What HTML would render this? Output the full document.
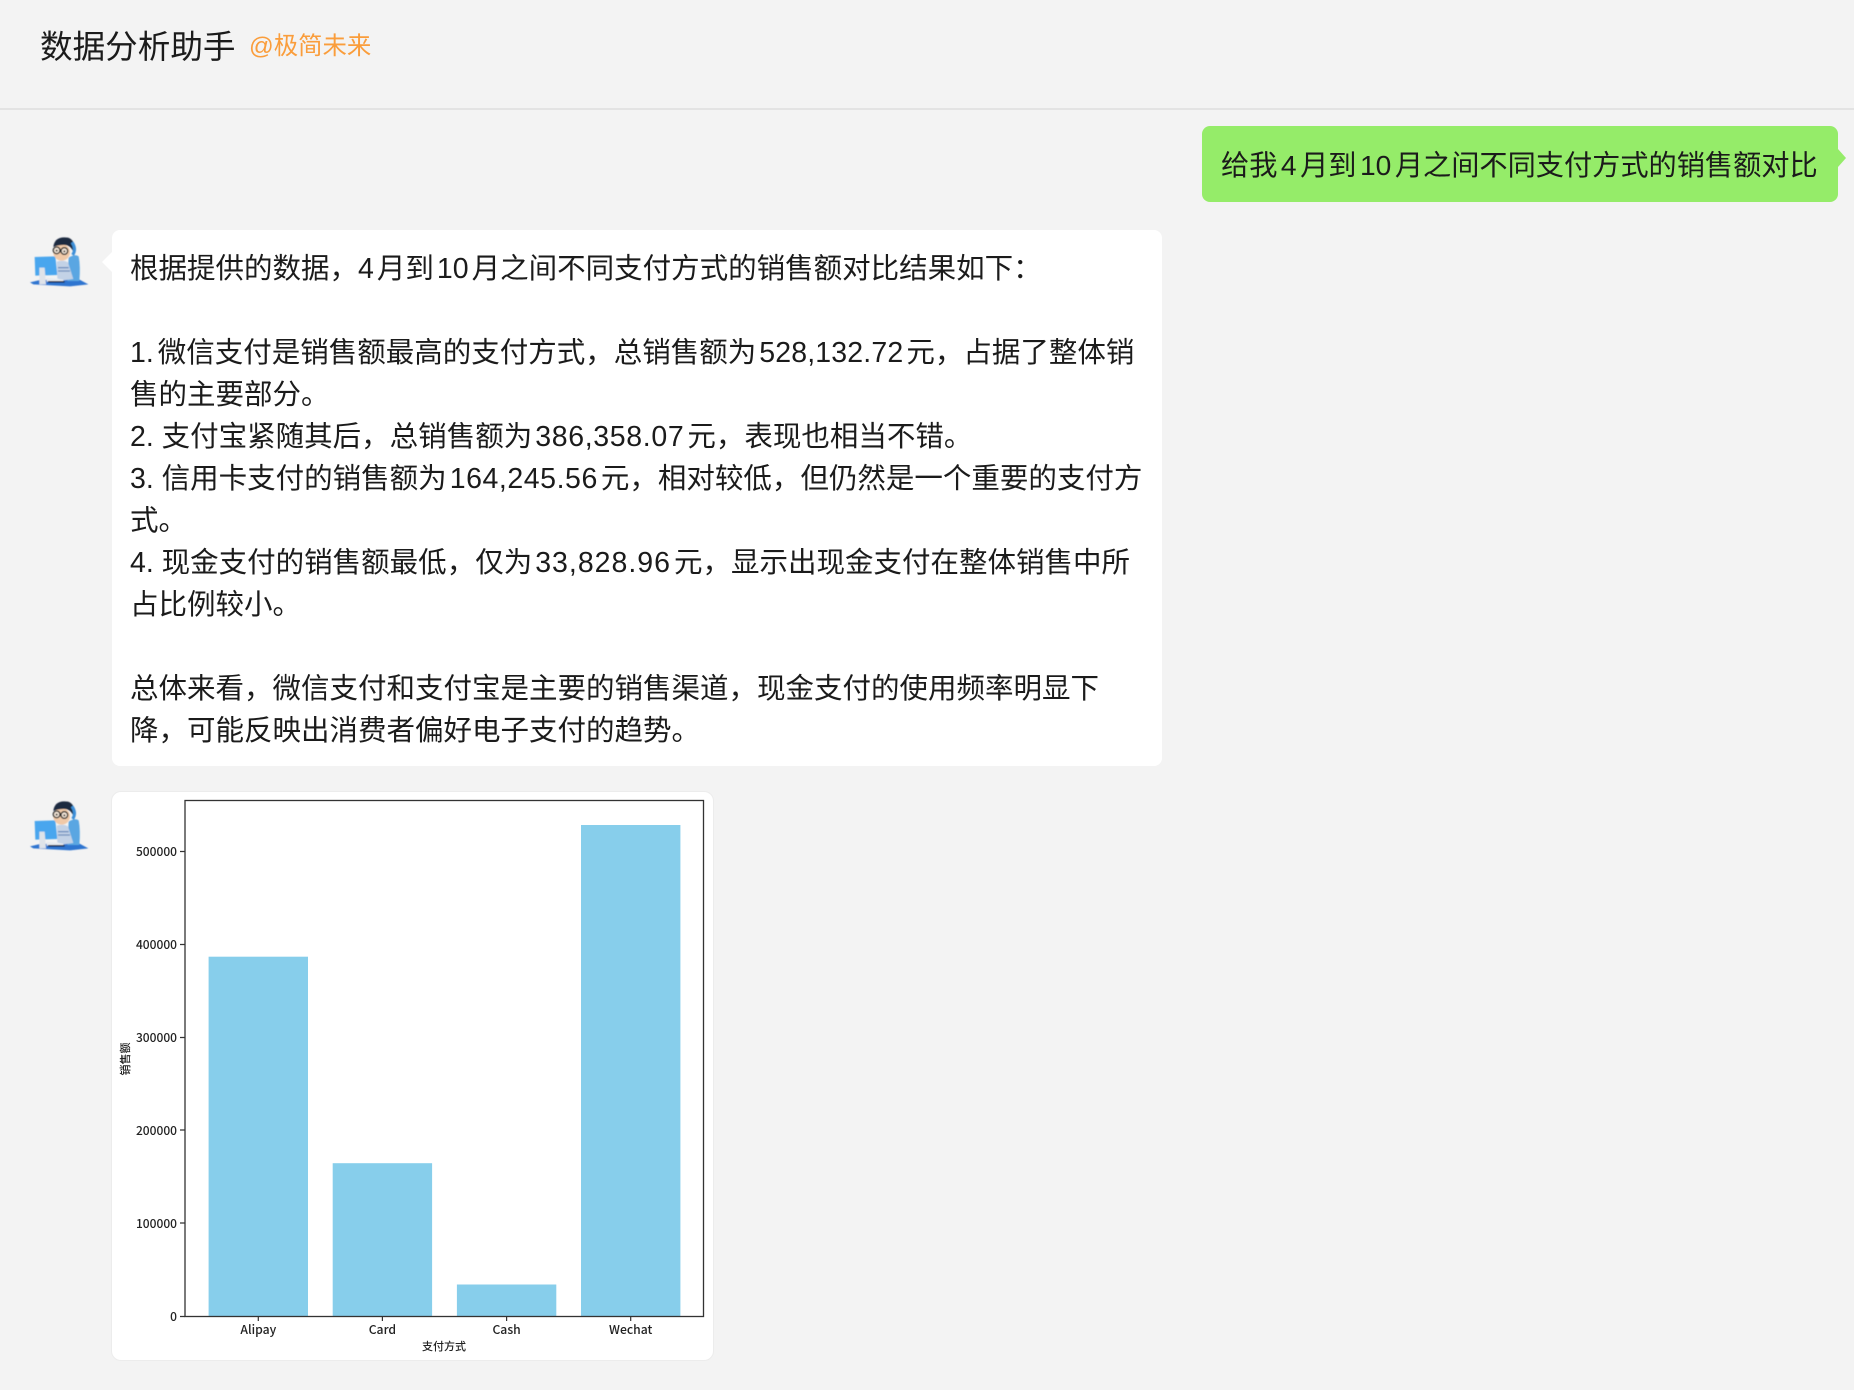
<!DOCTYPE html>
<html lang="zh"><head><meta charset="utf-8"><title>数据分析助手</title>
<style>
html,body{margin:0;padding:0;background:#f3f3f3}
body{width:1854px;height:1390px;position:relative;overflow:hidden;font-family:"Liberation Sans","Noto Sans CJK SC",sans-serif;color:#1b1b1b}
.abs{position:absolute}
.hdr{left:0;top:108px;width:1854px;height:2px;background:#e3e3e3}
.title{left:40px;top:25px;font-size:32.6px;line-height:44px;white-space:nowrap}
.sub{left:249px;top:29px;font-size:24.4px;line-height:36px;color:#fa9d3b;white-space:nowrap}
.green{left:1202px;top:126px;width:636px;height:76px;background:#95ec69;border-radius:8px;font-size:28.2px;line-height:78px;white-space:nowrap;text-indent:19px}
.green i{width:3.5px}
.tr{left:1838px;top:149px;width:0;height:0;border-left:8px solid #95ec69;border-top:9px solid transparent;border-bottom:9px solid transparent}
.msg{left:112px;top:230px;width:1050px;height:536px;background:#fff;border-radius:8px}
.tl{left:102px;top:252px;width:0;height:0;border-right:10px solid #fff;border-top:10px solid transparent;border-bottom:10px solid transparent}
.l{position:absolute;left:130px;font-size:28.5px;line-height:42px;white-space:nowrap}
i{display:inline-block;width:3px}
.n{margin-left:-4px}
.card{left:111px;top:791px;width:601px;height:568px;background:#fff;border:1px solid #ececec;border-radius:10px}
svg text{font-family:"Noto Sans CJK SC","Liberation Sans",sans-serif;fill:#222}
</style></head><body>
<div class="abs hdr"></div>
<div class="abs title">数据分析助手</div>
<div class="abs sub">@极简未来</div>

<div class="abs green">给我<i></i>4<i></i>月到<i></i>10<i></i>月之间不同支付方式的销售额对比</div>
<div class="abs tr"></div>

<svg class="abs" style="left:20px;top:225px" width="80" height="70" viewBox="0 0 240 210">
<g filter="url(#b)">
<path d="M30 172 L60 165 L175 162 L205 178 L150 184 L40 178Z" fill="#2f74d0"/>
<path d="M146 98 q18-12 30-4 q6 30 2 74 l-36 0Z" fill="#5aa6e2"/>
<path d="M44 96 L106 94 L112 150 L46 152Z" fill="#4aa6ee"/>
<path d="M58 128 L74 128 L78 178 L58 178Z" fill="#dfe3e9"/>
<path d="M110 110 q20-6 34 2 l16 50 l-30 4 l-18-6Z" fill="#c3d2e6"/>
<path d="M114 128 h32 M114 138 h36" stroke="#6e8fbd" stroke-width="4"/>
<path d="M80 158 l50 6 l0 6 l-50 0Z" fill="#e8ebef"/>
<path d="M84 168 h50 v5 h-50Z" fill="#1d2a4d"/>
<g transform="translate(0 -4)">
<ellipse cx="125" cy="86" rx="25" ry="25" fill="#f0c9a8"/>
<path d="M100 70 q4-34 44-28 q24 8 16 42 q-10-22-30-20 q-16 0-30 6Z" fill="#1f2940"/>
<circle cx="110" cy="80" r="10" fill="#f4e6d8" stroke="#222" stroke-width="4"/>
<circle cx="133" cy="82" r="10" fill="#f4e6d8" stroke="#222" stroke-width="4"/>
<circle cx="110" cy="81" r="3" fill="#222"/><circle cx="133" cy="83" r="3" fill="#222"/>
<path d="M156 56 q14 20 2 38" fill="none" stroke="#3c8fd8" stroke-width="9"/>
</g>
</g>
<defs><filter id="b"><feGaussianBlur stdDeviation="1.2"/></filter></defs>
</svg>

<div class="abs msg"></div>
<div class="abs tl"></div>
<div class="l" style="top:248px">根据提供的数据，4<i></i>月到<i></i>10<i></i>月之间不同支付方式的销售额对比结果如下：</div>
<div class="l" style="top:332px">1.<span class="n"> </span>微信支付是销售额最高的支付方式，总销售额为<i></i><span style="letter-spacing:.15px">528,132.72</span><i></i>元，占据了整体销</div>
<div class="l" style="top:374px">售的主要部分。</div>
<div class="l" style="top:416px">2. 支付宝紧随其后，总销售额为<i></i><span style="letter-spacing:.65px">386,358.07</span><i></i>元，表现也相当不错。</div>
<div class="l" style="top:458px">3. 信用卡支付的销售额为<i></i><span style="letter-spacing:.55px">164,245.56</span><i></i>元，相对较低，但仍然是一个重要的支付方</div>
<div class="l" style="top:500px">式。</div>
<div class="l" style="top:542px">4. 现金支付的销售额最低，仅为<i></i><span style="letter-spacing:1px">33,828.96</span><i></i>元，显示出现金支付在整体销售中所</div>
<div class="l" style="top:584px">占比例较小。</div>
<div class="l" style="top:668px">总体来看，微信支付和支付宝是主要的销售渠道，现金支付的使用频率明显下</div>
<div class="l" style="top:710px">降，可能反映出消费者偏好电子支付的趋势。</div>

<svg class="abs" style="left:20px;top:789px" width="80" height="70" viewBox="0 0 240 210">
<g filter="url(#b)">
<path d="M30 172 L60 165 L175 162 L205 178 L150 184 L40 178Z" fill="#2f74d0"/>
<path d="M146 98 q18-12 30-4 q6 30 2 74 l-36 0Z" fill="#5aa6e2"/>
<path d="M44 96 L106 94 L112 150 L46 152Z" fill="#4aa6ee"/>
<path d="M58 128 L74 128 L78 178 L58 178Z" fill="#dfe3e9"/>
<path d="M110 110 q20-6 34 2 l16 50 l-30 4 l-18-6Z" fill="#c3d2e6"/>
<path d="M114 128 h32 M114 138 h36" stroke="#6e8fbd" stroke-width="4"/>
<path d="M80 158 l50 6 l0 6 l-50 0Z" fill="#e8ebef"/>
<path d="M84 168 h50 v5 h-50Z" fill="#1d2a4d"/>
<g transform="translate(0 -4)">
<ellipse cx="125" cy="86" rx="25" ry="25" fill="#f0c9a8"/>
<path d="M100 70 q4-34 44-28 q24 8 16 42 q-10-22-30-20 q-16 0-30 6Z" fill="#1f2940"/>
<circle cx="110" cy="80" r="10" fill="#f4e6d8" stroke="#222" stroke-width="4"/>
<circle cx="133" cy="82" r="10" fill="#f4e6d8" stroke="#222" stroke-width="4"/>
<circle cx="110" cy="81" r="3" fill="#222"/><circle cx="133" cy="83" r="3" fill="#222"/>
<path d="M156 56 q14 20 2 38" fill="none" stroke="#3c8fd8" stroke-width="9"/>
</g>
</g>
</svg>

<div class="abs card"></div>
<svg class="abs" style="left:0;top:0" width="1854" height="1390">
<g fill="#87ceeb">
<rect x="208.6" y="956.7" width="99.4" height="359.8"/>
<rect x="332.7" y="1163.2" width="99.4" height="153.3"/>
<rect x="456.9" y="1284.5" width="99.4" height="32"/>
<rect x="581" y="825" width="99.4" height="491.5"/>
</g>
<rect x="185" y="800.5" width="518.5" height="516" fill="none" stroke="#333" stroke-width="1.3"/>
<g stroke="#333" stroke-width="1.2">
<path d="M180 1316.5h5M180 1223h5M180 1130h5M180 1037.5h5M180 944.5h5M180 851.5h5"/>
<path d="M258.3 1316v5M382.4 1316v5M506.6 1316v5M630.7 1316v5"/>
</g>
<g font-size="12" font-weight="500" text-anchor="end">
<text x="177" y="1321">0</text>
<text x="177" y="1228">100000</text>
<text x="177" y="1135">200000</text>
<text x="177" y="1042">300000</text>
<text x="177" y="949">400000</text>
<text x="177" y="856">500000</text>
</g>
<g font-size="12.2" font-weight="500" text-anchor="middle">
<text x="258.3" y="1334">Alipay</text>
<text x="382.4" y="1334">Card</text>
<text x="506.6" y="1334">Cash</text>
<text x="630.7" y="1334">Wechat</text>
<text x="444" y="1350" font-size="11">支付方式</text>
<text transform="translate(129 1059) rotate(-90)" font-size="11">销售额</text>
</g>
</svg>
</body></html>
